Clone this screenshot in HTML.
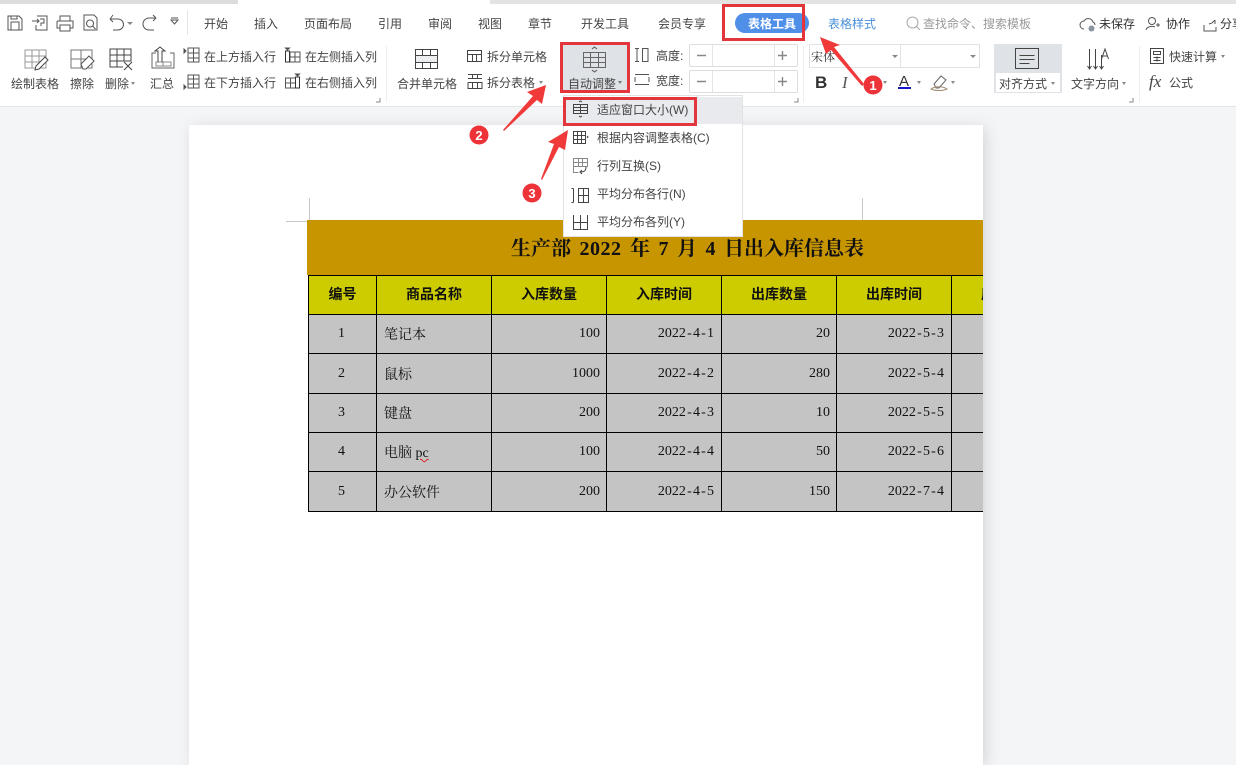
<!DOCTYPE html>
<html lang="zh"><head><meta charset="utf-8"><title>表格工具</title>
<style>
html,body{margin:0;padding:0}
body{width:1236px;height:744px;position:relative;overflow:hidden;background:#f4f5f7;font-family:"Liberation Sans","Noto Sans CJK SC",sans-serif;font-size:12px;color:#444}
.a{position:absolute}
.t{position:absolute;white-space:nowrap;line-height:16px;font-size:12px;color:#444}
svg{position:absolute;overflow:visible;fill:none;stroke:#555;stroke-width:1}
.r{position:absolute;border:3px solid #e2363c;box-sizing:border-box}
table{border-collapse:separate;border-spacing:0;table-layout:fixed;position:absolute;left:0;top:55px;width:759px;font-family:"Liberation Serif","Noto Serif CJK SC",serif;color:#111}
td{box-sizing:border-box;border-right:1px solid #000;border-bottom:1px solid #000;background:#c4c4c4;padding:0 6px 0 7px;font-size:14px;white-space:nowrap;overflow:hidden}
td:first-child{border-left:1px solid #000;text-align:center;padding:0 7px 0 5px}
th{box-sizing:border-box;border-right:1px solid #000;border-bottom:1px solid #000;border-top:1px solid #000;background:#cccc00;font-size:14px;font-family:"Liberation Sans","Noto Sans CJK SC",sans-serif;font-weight:700;color:#111;padding:0 0 2px}
th:first-child{border-left:1px solid #000}
td.n{text-align:right}
td.n:nth-child(4),td.n:nth-child(6){padding-right:7px}
i{font-style:normal;padding:0 1.200px}
u{text-decoration:underline wavy #d22;text-decoration-thickness:1px}
</style></head><body>
<div class="a" style="left:0;top:0;width:238px;height:4px;background:#dcdcdc"></div>
<div class="a" style="left:238px;top:0;width:252px;height:4px;background:#fff"></div>
<div class="a" style="left:490px;top:0;width:746px;height:4px;background:#e3e3e3"></div>
<div class="a" style="left:0;top:4px;width:1236px;height:102px;background:#fff;border-bottom:1px solid #e6e6e6"></div>

<!-- quick access -->
<svg style="left:0;top:0" width="190" height="40">
<path d="M8 16h11l3 3v11H8zM11 30v-8h8v8M11 16v3h6v-3"/>
<path d="M37 16h10v14H36v-5M32 21h7m-2-2l2 2-2 2M40 19h4v4h-3v3"/>
<path d="M60 21v-5h10v5M57 21h16v7h-3M60 28h-3v-7M60 25h10v6H60z"/>
<path d="M84 15h10l3 3v12H84zM90 20a3.500 3.500 0 1 0 .1 0M92.500 26l3 3"/>
<path d="M110 19h8a5.500 5.500 0 0 1 0 11h-5M110 19l3-4M110 19l3 3"/>
<path d="M156 18h-7a6 6 0 0 0 0 12h5M156 18l-3-3M156 18l-3 3"/>
<path d="M171 20h7l-3.500 4zM171 18h7"/>
</svg>
<div class="a" style="left:127px;top:22px;border:3px solid transparent;border-top:3px solid #888"></div>
<div class="a" style="left:187px;top:10px;width:1px;height:25px;background:#e5e5e5"></div>

<!-- tabs -->
<span class="t" style="left:204px;top:16px">开始</span>
<span class="t" style="left:254px;top:16px">插入</span>
<span class="t" style="left:304px;top:16px">页面布局</span>
<span class="t" style="left:378px;top:16px">引用</span>
<span class="t" style="left:428px;top:16px">审阅</span>
<span class="t" style="left:478px;top:16px">视图</span>
<span class="t" style="left:528px;top:16px">章节</span>
<span class="t" style="left:581px;top:16px">开发工具</span>
<span class="t" style="left:658px;top:16px">会员专享</span>
<div class="a" style="left:735px;top:13px;width:74px;height:20px;border-radius:10px;background:#4f8fe8"></div>
<span class="t" style="left:748px;top:16px;color:#fff;font-weight:700">表格工具</span>
<span class="t" style="left:828px;top:16px;color:#4a90d9">表格样式</span>
<svg style="left:906px;top:16px" width="16" height="16"><circle cx="6.500" cy="6.500" r="5.500" stroke="#aaa"/><path d="M10.500 10.500l3.500 3.500" stroke="#aaa"/></svg>
<span class="t" style="left:923px;top:16px;color:#999">查找命令、搜索模板</span>
<svg style="left:1078px;top:16px" width="160" height="18">
<path d="M6 13a4 4 0 0 1 0-8 5 5 0 0 1 9 1 3.500 3.500 0 0 1 2 3"/><circle cx="13.500" cy="12.500" r="3" fill="#8a94a0" stroke="none"/>
<circle cx="74" cy="5" r="3.500"/><path d="M68 14a6 4 0 0 1 9-3M78 9h4m-2-2v4"/>
<path d="M126 9v6h12v-4M131 8l3-1 3-3M137 4v4"/>
</svg>
<span class="t" style="left:1099px;top:16px;color:#333">未保存</span>
<span class="t" style="left:1166px;top:16px;color:#333">协作</span>
<span class="t" style="left:1220px;top:16px;color:#333">分享</span>

<!-- group 1 icons -->
<svg style="left:0;top:40px" width="380" height="60">
<path d="M25 10h21v18H25zM25 16h21M25 22h21M32 10v18M39 10v18" stroke="#999"/><path d="M35 30l1-4 9-9 3 3-9 9z" stroke="#444" fill="#fff"/>
<path d="M71 10h21v18H71zM71 19h21M81 10v18" stroke="#777"/><path d="M81 24l8-8 5 5-8 8h-3z" fill="#fff"/>
<path d="M110 9h21v18h-21zM110 15h21M110 21h21M117 9v18M124 9v18" stroke="#444"/><rect x="123" y="21.500" width="10" height="9" fill="#fff" stroke="none"/><path d="M124 22l8 8m0-8l-8 8" stroke="#444"/>
<path d="M156 13h-4v15h22V13h-4" stroke="#666"/><path d="M156 22h15v4h-15zM163 22v4" stroke="#888"/><path d="M158 22v-11h-3l5-4 5 4h-3v11" stroke="#444"/>
</svg>
<svg style="left:183px;top:48px" width="200" height="46">
<path d="M5 0h11v14H5zM5 5h11M5 10h11M10.500 0v14"/><path d="M1 1v4l2-2z" fill="#333"/>
<path d="M5 27h11v13H5zM5 31h11M5 36h11M10.500 27v13"/><path d="M1 37v4l2-2z" fill="#333"/>
<path d="M107 4h10v10h-10zM107 9h10M112 4v10"/><path d="M102.500 3h4v11h-4z" stroke="#333"/><path d="M102.500 0h4l-2 2z" fill="#333"/>
<path d="M102.500 30h10v10h-10zM102.500 35h10M107.500 30v10"/><path d="M112.500 29h4v11h-4z" stroke="#333"/><path d="M112.500 26h4l-2 2z" fill="#333"/>
</svg>
<span class="t" style="left:11px;top:76px">绘制表格</span>
<span class="t" style="left:70px;top:76px">擦除</span>
<span class="t" style="left:105px;top:76px">删除</span>
<div class="a" style="left:131px;top:82px;border:2.500px solid transparent;border-top:3px solid #888"></div>
<span class="t" style="left:150px;top:76px">汇总</span>
<span class="t" style="left:204px;top:49px">在上方插入行</span>
<span class="t" style="left:204px;top:75px">在下方插入行</span>
<span class="t" style="left:305px;top:49px">在左侧插入列</span>
<span class="t" style="left:305px;top:75px">在右侧插入列</span>
<div class="a" style="left:386px;top:46px;width:1px;height:56px;background:#eee"></div>
<svg style="left:376px;top:97px" width="6" height="6"><path d="M4 1v4H0" stroke="#888"/></svg>

<!-- group 2 -->
<svg style="left:410px;top:44px" width="150" height="50">
<rect x="6" y="11" width="22" height="8" fill="#eceef0" stroke="none"/>
<path d="M5.500 5.500h22v19h-22zM5.500 11.500h22M5.500 18.500h22M12.500 5.500v6M20.500 5.500v6M12.500 18.500v6M20.500 18.500v6" stroke="#444"/>
<path d="M57.500 6.500h14v11h-14zM57.500 10.500h14M62.500 10.500v7M66.500 10.500v7" stroke="#444"/>
<path d="M58 30.500h14M58 34.500h14M58 38.500h14v6H58v-6M62.500 30.500v4M67.500 30.500v4M62.500 38.500v6M67.500 38.500v6" stroke="#444"/>
</svg>
<span class="t" style="left:397px;top:76px">合并单元格</span>
<span class="t" style="left:487px;top:49px">拆分单元格</span>
<span class="t" style="left:487px;top:75px">拆分表格</span>
<div class="a" style="left:539px;top:81px;border:2.500px solid transparent;border-top:3px solid #888"></div>

<!-- auto adjust -->
<div class="a" style="left:562px;top:44px;width:66px;height:48px;background:#dfe2e6"></div>
<svg style="left:582px;top:45px" width="24" height="30">
<path d="M1.500 7.500h22v15h-22zM1.500 12.500h22M1.500 17.500h22M8.500 7.500v15M16.500 7.500v15" stroke="#666"/><path d="M10 4l2.500-2 2.500 2M10 25l2.500 2 2.500-2" stroke="#555"/>
</svg>
<span class="t" style="left:568px;top:76px">自动调整</span>
<div class="a" style="left:618px;top:81px;border:2.500px solid transparent;border-top:3px solid #777"></div>

<!-- height width -->
<svg style="left:634px;top:46px" width="20" height="44">
<path d="M1 2.500h4M1 15.500h4M3 2.500v13M8.500 2.500h5.500v13H8.500z" stroke="#555"/><path d="M1 28.500h14M1 38.500h14M1 31v5M15 31v5" stroke="#555"/>
</svg>
<span class="t" style="left:656px;top:48px">高度:</span>
<span class="t" style="left:656px;top:73px">宽度:</span>
<div class="a" style="left:689px;top:44px;width:107px;height:21px;border:1px solid #ddd;border-radius:2px"></div>
<div class="a" style="left:689px;top:70px;width:107px;height:21px;border:1px solid #ddd;border-radius:2px"></div>
<div class="a" style="left:712px;top:45px;width:1px;height:21px;background:#e4e4e4"></div>
<div class="a" style="left:712px;top:71px;width:1px;height:21px;background:#e4e4e4"></div>
<div class="a" style="left:774px;top:45px;width:1px;height:21px;background:#e4e4e4"></div>
<div class="a" style="left:774px;top:71px;width:1px;height:21px;background:#e4e4e4"></div>
<svg style="left:696px;top:50px" width="96" height="36">
<path d="M1 5.500h9M1 31.500h9M82 5.500h9M86.500 1v9M82 31.500h9M86.500 27v9" stroke="#888" stroke-width="1.400"/>
</svg>
<svg style="left:794px;top:97px" width="6" height="6"><path d="M4 1v4H0" stroke="#888"/></svg>
<div class="a" style="left:803px;top:46px;width:1px;height:56px;background:#eee"></div>

<!-- font -->
<div class="a" style="left:809px;top:44px;width:169px;height:22px;border:1px solid #e2e2e2"></div>
<div class="a" style="left:900px;top:45px;width:1px;height:22px;background:#e2e2e2"></div>
<span class="t" style="left:811px;top:49px;font-family:'Liberation Serif','Noto Serif CJK SC',serif;color:#333">宋体</span>
<div class="a" style="left:892px;top:55px;border:3px solid transparent;border-top:3px solid #888"></div>
<div class="a" style="left:970px;top:55px;border:3px solid transparent;border-top:3px solid #888"></div>
<span class="t" style="left:815px;top:74px;font-size:17px;font-weight:700;line-height:18px;color:#333">B</span>
<span class="t" style="left:842px;top:74px;font-size:17px;line-height:18px;font-family:'Liberation Serif',serif;font-style:italic;color:#555">I</span>
<span class="t" style="left:899px;top:73px;font-size:15px;line-height:17px;color:#333">A</span>
<div class="a" style="left:898px;top:87px;width:13px;height:2px;background:#1414c8"></div>
<div class="a" style="left:883px;top:81px;border:2.500px solid transparent;border-top:3px solid #888"></div>
<div class="a" style="left:917px;top:81px;border:2.500px solid transparent;border-top:3px solid #888"></div>
<div class="a" style="left:951px;top:81px;border:2.500px solid transparent;border-top:3px solid #888"></div>
<svg style="left:930px;top:74px" width="20" height="18">
<path d="M4 10l7-8 5 4-7 8H6z" stroke="#666"/><path d="M1 15c4-3 12-3 16 0-4 2-12 2-16 0z" stroke="#a08a70"/>
</svg>

<!-- align -->
<div class="a" style="left:994px;top:44px;width:68px;height:49px;background:#dfe2e6"></div>
<div class="a" style="left:996px;top:73px;width:64px;height:19px;background:#fff"></div>
<svg style="left:1014px;top:47px" width="26" height="24"><path d="M1.500 1.500h23v20h-23zM5.500 8.500h15M5.500 12.500h15M5.500 16.500h10" stroke="#444"/></svg>
<span class="t" style="left:999px;top:76px">对齐方式</span>
<div class="a" style="left:1051px;top:82px;border:2.500px solid transparent;border-top:3px solid #888"></div>
<svg style="left:1086px;top:47px" width="26" height="24"><path d="M3.500 2v20M9.500 2v20M15.500 8v14M1.500 19l2 3 2-3M7.500 19l2 3 2-3M13.500 19l2 3 2-3" stroke="#444"/><path d="M15.500 12l3.500-10 3.500 10M16.500 9h5" stroke="#444"/></svg>
<span class="t" style="left:1071px;top:76px">文字方向</span>
<div class="a" style="left:1122px;top:82px;border:2.500px solid transparent;border-top:3px solid #888"></div>
<svg style="left:1129px;top:97px" width="6" height="6"><path d="M4 1v4H0" stroke="#888"/></svg>
<div class="a" style="left:1139px;top:46px;width:1px;height:56px;background:#eee"></div>
<svg style="left:1150px;top:47px" width="16" height="18"><path d="M.5 1.500h13v15H.5zM3.500 4.500h7v3h-7zM3.500 10.500h7M3.500 13.500h7M7 9.500v5" stroke="#444"/></svg>
<span class="t" style="left:1169px;top:49px">快速计算</span>
<div class="a" style="left:1221px;top:55px;border:2.500px solid transparent;border-top:3px solid #888"></div>
<span class="t" style="left:1149px;top:73px;font-family:'Liberation Serif',serif;font-style:italic;font-size:17px;line-height:18px">fx</span>
<span class="t" style="left:1169px;top:75px">公式</span>

<!-- page -->
<div class="a" style="left:189px;top:125px;width:794px;height:640px;background:#fff;box-shadow:3px 2px 14px rgba(0,0,0,.13)"></div>
<div class="a" style="left:309px;top:198px;width:1px;height:22px;background:#c8c8c8"></div>
<div class="a" style="left:862px;top:198px;width:1px;height:22px;background:#c8c8c8"></div>
<div class="a" style="left:286px;top:221px;width:22px;height:1px;background:#c8c8c8"></div>

<!-- table -->
<div class="a" style="left:307px;top:220px;width:676px;height:295px;background:transparent;overflow:hidden">
<div class="a" style="left:0;top:0;width:680px;height:55px;background:#c69500"></div>
<span class="a" style="left:204px;top:14px;white-space:nowrap;word-spacing:3.500px;font-family:'Liberation Serif','Noto Serif CJK SC',serif;font-weight:700;font-size:20px;line-height:30px;color:#111">生产部 <span style="letter-spacing:.5px">2022</span> 年 7 月 4 日出入库信息表</span>
<table style="left:1px">
<colgroup><col style="width:69px"><col style="width:115px"><col style="width:115px"><col style="width:115px"><col style="width:115px"><col style="width:115px"><col style="width:115px"></colgroup>
<tr style="height:40px"><th>编号</th><th>商品名称</th><th>入库数量</th><th>入库时间</th><th>出库数量</th><th>出库时间</th><th>库存数量</th></tr>
<tr style="height:39px"><td>1</td><td>笔记本</td><td class="n">100</td><td class="n">2022<i>-</i>4<i>-</i>1</td><td class="n">20</td><td class="n">2022<i>-</i>5<i>-</i>3</td><td></td></tr>
<tr style="height:40px"><td>2</td><td>鼠标</td><td class="n">1000</td><td class="n">2022<i>-</i>4<i>-</i>2</td><td class="n">280</td><td class="n">2022<i>-</i>5<i>-</i>4</td><td></td></tr>
<tr style="height:39px"><td>3</td><td>键盘</td><td class="n">200</td><td class="n">2022<i>-</i>4<i>-</i>3</td><td class="n">10</td><td class="n">2022<i>-</i>5<i>-</i>5</td><td></td></tr>
<tr style="height:39px"><td>4</td><td>电脑 <u>pc</u></td><td class="n">100</td><td class="n">2022<i>-</i>4<i>-</i>4</td><td class="n">50</td><td class="n">2022<i>-</i>5<i>-</i>6</td><td></td></tr>
<tr style="height:40px"><td>5</td><td>办公软件</td><td class="n">200</td><td class="n">2022<i>-</i>4<i>-</i>5</td><td class="n">150</td><td class="n">2022<i>-</i>7<i>-</i>4</td><td></td></tr>
</table>
</div>

<!-- dropdown -->
<div class="a" style="left:563px;top:95px;width:180px;height:142px;background:#fff;border:1px solid #e2e2e2;box-sizing:border-box"></div>
<div class="a" style="left:564px;top:97px;width:178px;height:27px;background:#e8eaee"></div>
<svg style="left:570px;top:100px" width="20" height="135">
<path d="M3.500 4.500h14v9h-14zM3.500 7.500h14M3.500 10.500h14M10.500 4.500v9M9 2l1.500-1 1.500 1M9 16l1.500 1 1.500-1" stroke="#444"/>
<path d="M3.500 31.500h12v12h-12zM3.500 35.500h12M3.500 39.500h12M7.500 31.500v12M11.500 31.500v12M17 36l1 1-1 1" stroke="#444"/>
<path d="M3.500 58.500h14v8h-14zM3.500 62.500h14M8.500 58.500v8M12.500 58.500v8M3.500 66.500v6h5" stroke="#888"/><path d="M16 67c0 4-2 5-6 5M12 70l-2 2 2 2" stroke="#444"/>
<path d="M3.500 88.500v14M1.500 88.500h2M1.500 102.500h2M8.500 88.500h10v14h-10zM8.500 95.500h10M13.500 88.500v14" stroke="#444"/>
<path d="M3.500 115v7M10.500 115v14M17.500 115v7M3.500 122.500h14v7h-14z" stroke="#444"/>
</svg>
<span class="t" style="left:597px;top:102px">适应窗口大小(W)</span>
<span class="t" style="left:597px;top:130px">根据内容调整表格(C)</span>
<span class="t" style="left:597px;top:158px">行列互换(S)</span>
<span class="t" style="left:597px;top:186px">平均分布各行(N)</span>
<span class="t" style="left:597px;top:214px">平均分布各列(Y)</span>

<!-- annotations -->
<div class="r" style="left:722px;top:4px;width:83px;height:37px"></div>
<div class="r" style="left:560px;top:42px;width:70px;height:51px"></div>
<div class="r" style="left:563px;top:97px;width:134px;height:29px"></div>
<svg style="left:0;top:0" width="1236" height="744">
<path d="M820 37l20 8-6 2 30 37-2 2-31-36-5 4z" fill="#f03a3a" stroke="none"/>
<path d="M546 85l-4 19-5-4-33 31-1-1 30-34-6-4z" fill="#f03a3a" stroke="none"/>
<path d="M568 130l-3 20-6-3-17 33-1-1 13-35-6-2z" fill="#f03a3a" stroke="none"/>
<circle cx="873" cy="85" r="9.500" fill="#ee3338" stroke="none"/>
<circle cx="479" cy="135" r="9.500" fill="#ee3338" stroke="none"/>
<circle cx="532" cy="193" r="9.500" fill="#ee3338" stroke="none"/>
<text x="873" y="90" text-anchor="middle" font-size="13" font-weight="700" fill="#fff" stroke="none" font-family="Liberation Sans">1</text>
<text x="479" y="140" text-anchor="middle" font-size="13" font-weight="700" fill="#fff" stroke="none" font-family="Liberation Sans">2</text>
<text x="532" y="198" text-anchor="middle" font-size="13" font-weight="700" fill="#fff" stroke="none" font-family="Liberation Sans">3</text>
</svg>
</body></html>
